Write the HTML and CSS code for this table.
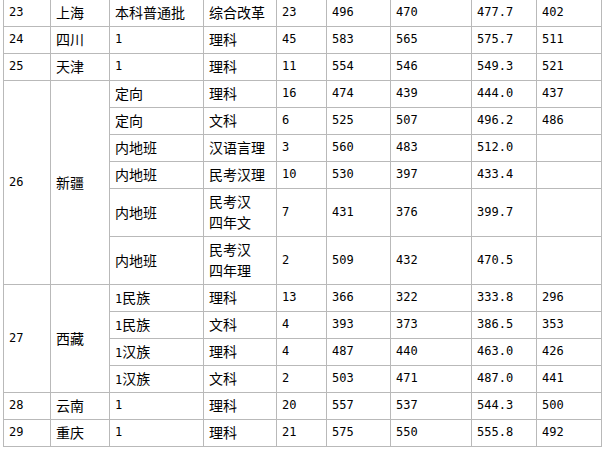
FILE: index.html
```html
<!DOCTYPE html>
<html lang="zh-CN">
<head>
<meta charset="utf-8">
<link rel="stylesheet" href="styles.css">
</head>
<body>
<table class="grid">
  <colgroup>
    <col class="c1"><col class="c2"><col class="c3"><col class="c4"><col class="c5">
    <col class="c6"><col class="c7"><col class="c8"><col class="c9">
  </colgroup>
  <tbody>
    <tr><td class="n">23</td><td>上海</td><td>本科普通批</td><td>综合改革</td><td class="n">23</td><td class="n">496</td><td class="n">470</td><td class="n">477.7</td><td class="n">402</td></tr>
    <tr><td class="n">24</td><td>四川</td><td class="n">1</td><td>理科</td><td class="n">45</td><td class="n">583</td><td class="n">565</td><td class="n">575.7</td><td class="n">511</td></tr>
    <tr><td class="n">25</td><td>天津</td><td class="n">1</td><td>理科</td><td class="n">11</td><td class="n">554</td><td class="n">546</td><td class="n">549.3</td><td class="n">521</td></tr>
    <tr><td class="n" rowspan="6">26</td><td rowspan="6">新疆</td><td>定向</td><td>理科</td><td class="n">16</td><td class="n">474</td><td class="n">439</td><td class="n">444.0</td><td class="n">437</td></tr>
    <tr><td>定向</td><td>文科</td><td class="n">6</td><td class="n">525</td><td class="n">507</td><td class="n">496.2</td><td class="n">486</td></tr>
    <tr><td>内地班</td><td>汉语言理</td><td class="n">3</td><td class="n">560</td><td class="n">483</td><td class="n">512.0</td><td></td></tr>
    <tr><td>内地班</td><td>民考汉理</td><td class="n">10</td><td class="n">530</td><td class="n">397</td><td class="n">433.4</td><td></td></tr>
    <tr class="tall"><td>内地班</td><td>民考汉<br>四年文</td><td class="n">7</td><td class="n">431</td><td class="n">376</td><td class="n">399.7</td><td></td></tr>
    <tr class="tall"><td>内地班</td><td>民考汉<br>四年理</td><td class="n">2</td><td class="n">509</td><td class="n">432</td><td class="n">470.5</td><td></td></tr>
    <tr><td class="n" rowspan="4">27</td><td rowspan="4">西藏</td><td><span class="d">1</span>民族</td><td>理科</td><td class="n">13</td><td class="n">366</td><td class="n">322</td><td class="n">333.8</td><td class="n">296</td></tr>
    <tr><td><span class="d">1</span>民族</td><td>文科</td><td class="n">4</td><td class="n">393</td><td class="n">373</td><td class="n">386.5</td><td class="n">353</td></tr>
    <tr><td><span class="d">1</span>汉族</td><td>理科</td><td class="n">4</td><td class="n">487</td><td class="n">440</td><td class="n">463.0</td><td class="n">426</td></tr>
    <tr><td><span class="d">1</span>汉族</td><td>文科</td><td class="n">2</td><td class="n">503</td><td class="n">471</td><td class="n">487.0</td><td class="n">441</td></tr>
    <tr><td class="n">28</td><td>云南</td><td class="n">1</td><td>理科</td><td class="n">20</td><td class="n">557</td><td class="n">537</td><td class="n">544.3</td><td class="n">500</td></tr>
    <tr><td class="n">29</td><td>重庆</td><td class="n">1</td><td>理科</td><td class="n">21</td><td class="n">575</td><td class="n">550</td><td class="n">555.8</td><td class="n">492</td></tr>
  </tbody>
</table>
</body>
</html>
```

FILE: styles.css
```css
html, body {
  margin: 0;
  padding: 0;
  background: #ffffff;
}

body {
  overflow: hidden;
}

.grid {
  border-collapse: collapse;
  table-layout: fixed;
  width: 599px;
  margin: -1px 0 0 3px;
  font-family: "Noto Sans CJK SC", "Noto Sans", sans-serif;
  font-size: 14px;
  color: #000000;
}

.c1 { width: 47px; }
.c2 { width: 59px; }
.c3 { width: 94px; }
.c4 { width: 73px; }
.c5 { width: 50px; }
.c6 { width: 64px; }
.c7 { width: 81px; }
.c8 { width: 65px; }
.c9 { width: 65px; }

.grid td {
  border: 1px solid #b9b9b9;
  padding: 2px 5px 3px 5px;
  line-height: 21px;
  height: 21px;
  vertical-align: middle;
  text-align: left;
  white-space: nowrap;
  overflow: hidden;
}

.grid .tall td {
  height: 42px;
}

.n {
  font-family: "DejaVu Sans Mono", "Liberation Mono", monospace;
  font-size: 12px;
}

.d {
  font-family: "DejaVu Sans Mono", "Liberation Mono", monospace;
  font-size: 12px;
  line-height: 12px;
}
```
